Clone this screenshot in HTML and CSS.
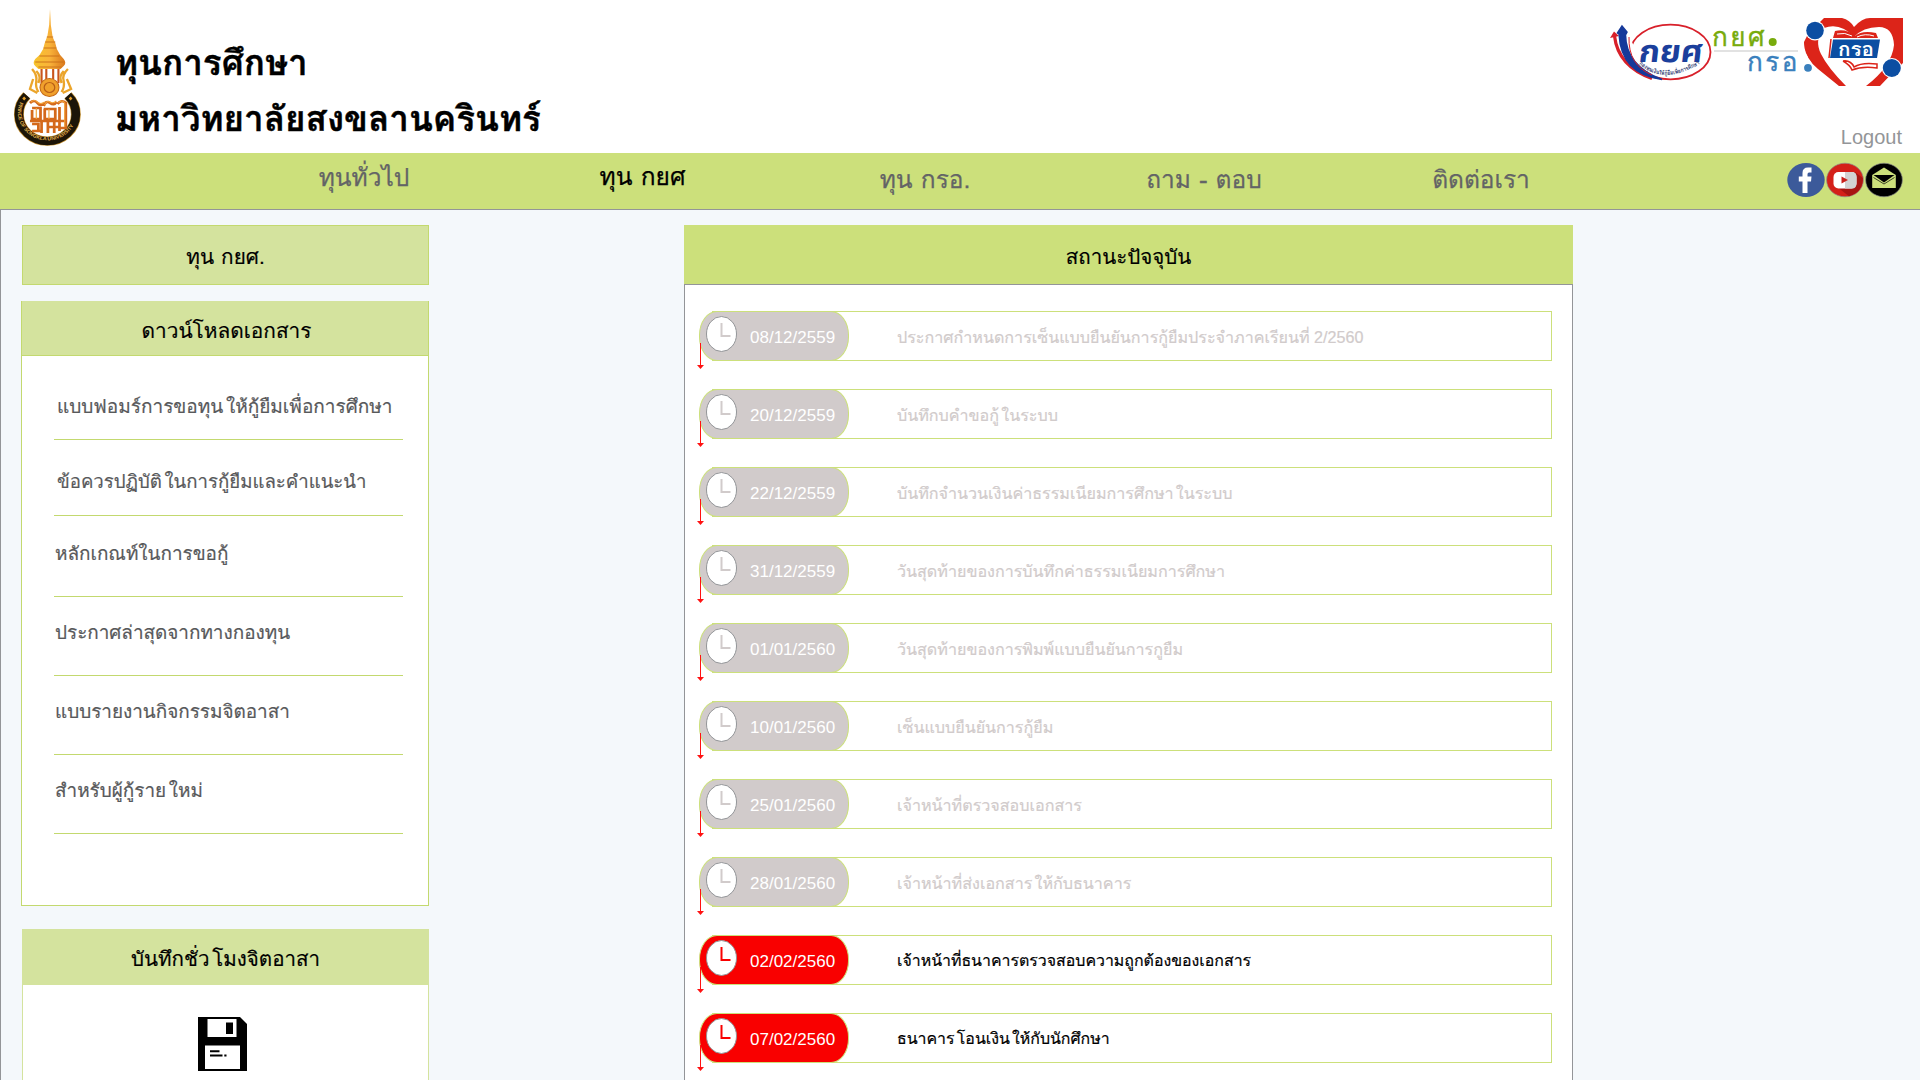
FILE: index.html
```html
<!DOCTYPE html>
<html lang="th">
<head>
<meta charset="utf-8">
<title>ทุนการศึกษา มหาวิทยาลัยสงขลานครินทร์</title>
<link rel="stylesheet" href="styles.css">
</head>
<body>
<header class="header">
  <svg class="emblem" viewBox="-2.400 -1 94.800 153" preserveAspectRatio="none" aria-hidden="true">
    <defs>
      <linearGradient id="gold" x1="0" x2="1"><stop offset="0" stop-color="#f7c52c"/><stop offset=".5" stop-color="#f9b33a"/><stop offset="1" stop-color="#d9771c"/></linearGradient>
      <path id="ringText" d="M19.500 101A28 28 0 1 0 71.500 101"/>
    </defs>
    <path d="M45 8L45.800 24L47.500 36L50 42L51.500 48Q54 54 58 58Q61 62 58 65L55 68H34L31 65Q28 62 31 58Q36 54 38.500 48L40 42L42.500 35L44.200 24Z" fill="url(#gold)"/>
    <path d="M42 36H48M40.500 41H50M39 47H51M35 55H54M31 61H58M34 66H56" stroke="#c96f18" stroke-width=".9" fill="none"/>
    <path d="M37 68V82M41.500 68V78M48 68V78M53 68V82" stroke="#c9541c" stroke-width="2" fill="none"/>
    <path d="M28 68Q33 74 32 80Q31 86 34 91M32 70Q37 75 34 82M29 78L26 88L33 92M62 68Q56 74 58 80Q59 86 56 91M58 70Q53 75 56 82M61 78L65 88L57 92" stroke="#eba52b" stroke-width="2.200" fill="none"/>
    <circle cx="44.500" cy="86.500" r="9" fill="#f0a02c" stroke="#c56a16"/>
    <circle cx="44.500" cy="86.500" r="5" fill="none" stroke="#b85f18" stroke-width="1.200"/>
    <path d="M23 94.500A27 27 0 1 0 62 94.500" fill="none" stroke="#c5902e" stroke-width="9.400"/>
    <path d="M23 94.500A27 27 0 1 0 62 94.500" fill="none" stroke="#1c1508" stroke-width="8.200"/>
    <path d="M20.500 95.500l1.800 2-1.800 2-1.800-2zM64.500 95.500l1.800 2-1.800 2-1.800-2z" fill="#e8a12c"/>
    <text class="ring-text" transform="translate(-3 0)"><textPath href="#ringText" startOffset="0">PRINCE OF SONGKLA UNIVERSITY</textPath></text>
    <g transform="translate(-3 -1)">
    <path d="M29 103Q33 99 36 103T43 103M42 106Q44 100 48 103T54 102M55 104Q59 99 63 103V128H58M57 107V131M31 108H39V119H31V110M42 109H53V119H43V109M31 124H37V131M40 121V133M46 121V133M52 120V133M29 121H62M31 131H40M46 127H57" fill="none" stroke="#d4691b" stroke-width="2.600"/>
    <path d="M30 102Q33 99 36 102T43 102M43 105Q45 100 48 102T54 101M56 103Q59 99 62 103V127M35 108V119M47 109V119" fill="none" stroke="#f3a33a" stroke-width="1.100"/>
    </g>
  </svg>
  <h1 class="title">ทุนการศึกษา<br>มหาวิทยาลัยสงขลานครินทร์</h1>
  <div class="header-side">
    <svg class="partners" viewBox="1608 14 296 76" aria-hidden="true">
      <defs>
        <path id="fundText" d="M1639 64Q1664 87 1703 62"/>
        <clipPath id="heartClip"><rect x="1804" y="18" width="99" height="68"/></clipPath>
      </defs>
      <ellipse cx="1670.500" cy="52" rx="40" ry="27.300" fill="#fff" stroke="#d8202a" stroke-width="1.800"/>
      <path d="M1630 38Q1612 18 1624 60L1650 79" fill="#fff"/>
      <path d="M1614.500 36Q1618 66 1652 78.500" fill="none" stroke="#d8202a" stroke-width="3.200"/>
      <path d="M1610 38L1614 31.500L1619 36Z" fill="#d8202a"/>
      <path d="M1617.500 33L1622 26L1627 32L1625.500 35Q1626 66 1662 79.500Q1621 74 1619 34Z" fill="#16399a" stroke="#16399a" stroke-width="1.500"/>
      <path d="M1629 37Q1628 65 1652 75" fill="none" stroke="#d8202a"/>
      <text class="fund-mark" transform="matrix(1 0 -.12 1 1638 61.500)" textLength="64" lengthAdjust="spacingAndGlyphs">กยศ</text>
      <text class="fund-name"><textPath href="#fundText" textLength="66" lengthAdjust="spacingAndGlyphs">กองทุนเงินให้กู้ยืมเพื่อการศึกษา</textPath></text>
      <text class="acronym green" x="1712" y="45.500">กยศ</text>
      <circle cx="1772.700" cy="42" r="4" fill="#78ab0c"/>
      <path d="M1714 51H1798" stroke="#e2e2e2" stroke-width="2"/>
      <text class="acronym blue" x="1747" y="71">กรอ</text>
      <g clip-path="url(#heartClip)">
        <path d="M1824 18H1842Q1850 20 1854 27Q1862 18 1870 18H1903V63Q1895 70 1880 86H1846Q1832 72 1812 62Q1804 54 1804 42L1808 34Z" fill="#dc2419"/>
        <path d="M1804 53Q1814 70 1846 89H1804Z" fill="#fff"/>
        <path d="M1804 42Q1806 60 1818 69L1839 86H1850L1820 50Z" fill="#dc2419"/>
        <path d="M1854 37Q1840 22 1824 28Q1814 40 1821 54Q1828 68 1846 86H1866Q1892 66 1894 45Q1893 27 1879 27Q1863 27 1854 37Z" fill="#fff"/>
      </g>
      <path d="M1835 31Q1846 28 1855 36Q1862 30 1876 33L1878 38H1833Z" fill="#dc2419"/>
      <path d="M1852 36Q1845 32 1837 34M1857 37Q1865 33 1874 36" stroke="#fff" fill="none"/>
      <path d="M1833 39.500H1880L1877 58H1830Z" fill="#0c4ea2"/>
      <path d="M1831 39L1829 58M1843 61Q1851 60 1854 67Q1862 62 1877 64V68Q1862 66 1852 70Q1850 65 1843 61" fill="none" stroke="#dc2419" stroke-width="1.500"/>
      <text class="heart-text" x="1838" y="55.500" textLength="36" lengthAdjust="spacingAndGlyphs">กรอ</text>
      <circle cx="1815" cy="30.500" r="10" fill="#fff"/><circle cx="1815" cy="30.500" r="8.800" fill="#0c4ea2"/>
      <circle cx="1891.800" cy="68" r="10" fill="#fff"/><circle cx="1891.800" cy="68" r="9" fill="#0c4ea2"/>
      <circle cx="1808" cy="67.800" r="4.800" fill="#fff"/><circle cx="1808" cy="67.800" r="3.900" fill="#3a80bd"/>
    </svg>
    <a class="logout">Logout</a>
  </div>
</header>

<nav class="nav">
  <ul class="menu">
    <li class="raised">ทุนทั่วไป</li>
    <li class="current">ทุน กยศ</li>
    <li class="loan">ทุน กรอ.</li>
    <li>ถาม - ตอบ</li>
    <li class="contact">ติดต่อเรา</li>
  </ul>
  <div class="social">
    <svg viewBox="0 0 38 36"><ellipse cx="19" cy="18" rx="18.700" ry="17" fill="#3c5a9a"/><path d="M15.500 31V19.500H11.800V14.500H15.500V11Q15.500 5.500 21 5.500H24.500V10.500H22Q20.500 10.500 20.500 12.200V14.500H24.500L24 19.500H20.500V31Z" fill="#fff"/></svg>
    <svg viewBox="0 0 38 36"><ellipse cx="19" cy="18" rx="18.400" ry="16.800" fill="#d42019" stroke="#8c8f8a" stroke-width=".7"/><path d="M29 10L36.800 16Q37 30 23 34.300L10 24Z" fill="#a81512"/><rect x="7.500" y="10" width="23" height="16.500" rx="5" fill="#fff"/><path d="M19 10H26Q30.500 10 30.500 15V21Q30.500 26.500 26 26.500H19Z" fill="#d2d2d2"/><path d="M15.500 14.500V21.500L22 18Z" fill="#c9201b"/></svg>
    <svg viewBox="0 0 38 36"><ellipse cx="19" cy="18" rx="18.400" ry="16.800" fill="#000" stroke="#8c8f8a" stroke-width=".7"/><path d="M7.200 13L19 5.500L30.800 13V26H7.200Z" fill="#cce07b"/><path d="M8.500 13H29.500L19 20.500Z" fill="#000"/><path d="M8.500 15.500L19 22L29.500 15.500" fill="none" stroke="#000" stroke-width=".7"/></svg>
  </div>
</nav>

<main class="page">
  <aside class="sidebar">
    <h2 class="topic">ทุน กยศ.</h2>
    <section class="downloads">
      <h2 class="panel-title">ดาวน์โหลดเอกสาร</h2>
      <ul class="links">
        <li class="indent">แบบฟอมร์การขอทุน<span class="lead">ใ</span>ห้กู้ยืมเพื่อการศึกษา</li>
        <li class="indent second">ข้อควรปฏิบัติ<span class="lead">ใ</span>นการกู้ยืมและคำแนะนำ</li>
        <li class="third">หลักเกณท์ในการขอกู้</li>
        <li>ประกาศล่าสุดจากทางกองทุน</li>
        <li>แบบรายงานกิจกรรมจิตอาสา</li>
        <li>สำหรับผู้กู้ราย<span class="lead">ใ</span>หม่</li>
      </ul>
    </section>
    <section class="hours">
      <h2 class="panel-title">บันทึกชั่ว<span class="lead">โ</span>มงจิตอาสา</h2>
      <svg class="floppy" viewBox="0 0 49 54"><path d="M0 0H42L49 7V54H0Z"/><path d="M9.500 2H38.500V20H9.500ZM7 28.500H42V52H7Z" fill="#fff"/><path d="M28 5.500H35V17H28Z"/><path d="M12 34.300H21.500M12 38.500H24.500M26.300 38.500H28.500" stroke="#000" stroke-width="2"/></svg>
    </section>
  </aside>

  <section class="status">
    <h2 class="status-title">สถานะปัจจุบัน</h2>
    <ol class="steps" id="steps"></ol>
  </section>
</main>
<script src="steps.js"></script>
</body>
</html>
```
FILE: styles.css
```css
* { box-sizing: border-box; }
body {
  margin: 0;
  height: 1080px;
  overflow: hidden;
  display: flex;
  flex-direction: column;
  background: #f4f8fb;
  color: #000;
  font-family: "Loma", "Liberation Sans", "Noto Sans", sans-serif;
}
h1, h2, ul, ol { margin: 0; padding: 0; font-weight: normal; }
ul, ol { list-style: none; }
svg { display: block; flex: none; }

.header { display: flex; height: 153px; flex: none; background: #fff; }
.emblem { width: 100px; height: 153px; }
.ring-text { font: bold 5px "Liberation Sans", sans-serif; fill: #e3b04a; }
.title { margin-left: 15px; padding-top: 35px; font-size: 35px; line-height: 56px; font-weight: bold; white-space: nowrap; -webkit-text-stroke: .4px currentColor; }
.header-side { margin-left: auto; display: flex; flex-direction: column; align-items: flex-end; padding: 14px 16px 0 0; }
.partners { width: 296px; height: 76px; }
.fund-mark { font: bold 31px "Noto Sans Thai", "Loma", sans-serif; fill: #1b3f9c; }
.fund-name { font: bold 6px "Loma", sans-serif; fill: #27336b; }
.acronym { font: 26px "Loma", sans-serif; letter-spacing: 2.5px; }
.green { fill: #78ab0c; stroke: #78ab0c; stroke-width: .4px; }
.blue { fill: #3a80bd; stroke: #3a80bd; stroke-width: .4px; }
.heart-text { font: bold 19px "Loma", sans-serif; fill: #fff; }
.logout { margin: 35px 2px 0 0; font: 20px/24px "Liberation Sans", sans-serif; color: #939598; }

.nav { display: flex; height: 57px; flex: none; background: #cce07b; border-bottom: 1px solid #939598; }
.menu { display: grid; grid-template-columns: repeat(5, 280px); margin-left: 224px; font-size: 24.5px; line-height: 32px; color: #636466; text-align: center; -webkit-text-stroke: .25px currentColor; }
.menu li { padding-top: 11px; }
.menu .raised { padding-top: 9px; }
.menu .current { padding: 8px 3px 0 0; color: #000; }
.menu .loan { padding-left: 2px; }
.menu .contact { padding-right: 6px; }
.social { display: flex; gap: 1px; margin-left: auto; padding: 9px 17px 0 0; }
.social svg { width: 38px; height: 36px; }

.page { display: flex; flex: 1; min-height: 0; overflow: hidden; border-left: 1px solid #939598; }
.sidebar { width: 429px; padding: 15px 0 0 20px; flex: none; display: flex; flex-direction: column; }
.topic { height: 60px; flex: none; margin-left: 1px; padding-top: 17px; border: 1px solid #c3d96f; background: #d4e39e; font-size: 20.7px; line-height: 28px; text-align: center; width: 407px; -webkit-text-stroke: .2px currentColor; }
.panel-title { background: #d4e39e; font-size: 20.8px; line-height: 28px; text-align: center; -webkit-text-stroke: .2px currentColor; }
.downloads { width: 408px; height: 605px; flex: none; margin-top: 16px; background: #fff; border: 1px solid #c3d96f; border-top: 0; }
.downloads .panel-title { height: 55px; padding: 16px 0 0 3px; border-bottom: 1px solid #c3d96f; }
.links { margin: 0 25px 0 32px; font-size: 18.9px; line-height: 26px; color: #58595b; white-space: nowrap; -webkit-text-stroke: .2px currentColor; }
.links li { height: 79px; padding: 22px 0 0 1px; border-bottom: 1px solid #c3d96f; }
.links .indent { height: 84px; padding: 37px 0 0 3px; font-size: 19px; }
.links .second { height: 76px; padding-top: 29px; font-size: 18.6px; }
.links .third { height: 81px; padding-top: 24px; }
.lead { padding-left: .14em; }
.hours { width: 407px; flex: 1; min-height: 0; margin: 23px 0 0 1px; background: #fff; border: 1px solid #d4e39e; border-bottom: 0; }
.hours .panel-title { height: 55px; padding-top: 15px; font-size: 20.5px; }
.floppy { width: 49px; height: 54px; margin: 32px 0 0 175px; }

.status { width: 889px; margin: 15px 0 0 254px; display: flex; flex-direction: column; }
.status-title { height: 59px; flex: none; padding-top: 18px; background: #cce07b; font-size: 20.5px; line-height: 28px; text-align: center; -webkit-text-stroke: .2px currentColor; }
.steps { flex: 1; min-height: 0; padding: 26px 20px 0 27px; display: grid; grid-auto-rows: 50px; align-content: start; gap: 28px; background: #fff; border: 1px solid #939598; border-bottom: 0; }
.step { display: flex; border: 1px solid #cce07b; white-space: nowrap; color: #d1cbcb; }
.pill { position: relative; display: flex; width: 150px; margin: -1px 0 -1px -14px; padding-left: 6px; border: 1px solid #cce07b; border-radius: 18px / 24px; background: #d1cbcb; color: #fff; }
.clock { width: 31px; height: 36px; margin-top: 4px; }
.face { fill: #fff; stroke: #939598; }
.hands { fill: none; stroke: #d1cbcb; stroke-width: 2; }
.date { margin-left: 13px; padding-top: 14px; font: 17px/24px "Liberation Sans", sans-serif; }
.arrow { position: absolute; left: -3px; top: 31px; width: 7px; height: 26px; }
.label { padding: 13px 0 0 48px; font-family: "Liberation Sans", "Loma", sans-serif; font-size: 16.1px; line-height: 24px; -webkit-text-stroke: .2px currentColor; }
.active { color: #000; }
.active .label { font-size: 15.9px; }
.active .pill { background: #f90000; }
.active .hands { stroke: #f90000; }
```
FILE: steps.js
```js
const steps = [
  ["08/12/2559", "ประกาศกำหนดการเซ็นแบบยืนยันการกู้ยืมประจำภาคเรียนที่ 2/2560"],
  ["20/12/2559", "บันทึกบคำขอกู้ในระบบ"],
  ["22/12/2559", "บันทึกจำนวนเงินค่าธรรมเนียมการศึกษาในระบบ"],
  ["31/12/2559", "วันสุดท้ายของการบันทึกค่าธรรมเนียมการศึกษา"],
  ["01/01/2560", "วันสุดท้ายของการพิมพ์แบบยืนยันการกูยืม"],
  ["10/01/2560", "เซ็นแบบยืนยันการกู้ยืม"],
  ["25/01/2560", "เจ้าหน้าที่ตรวจสอบเอกสาร"],
  ["28/01/2560", "เจ้าหน้าที่ส่งเอกสารให้กับธนาคาร"],
  ["02/02/2560", "เจ้าหน้าที่ธนาคารตรวจสอบความถูกต้องของเอกสาร", true],
  ["07/02/2560", "ธนาคารโอนเงินให้กับนักศึกษา", true]
];

document.getElementById("steps").innerHTML = steps.map(([date, label, active]) => `
  <li class="step${active ? " active" : ""}">
    <div class="pill">
      <svg class="clock" viewBox="0 0 31 36"><ellipse class="face" cx="15.500" cy="18" rx="15" ry="17.500"/><path class="hands" d="M15.500 7V20H24.500"/></svg>
      <span class="date">${date}</span>
      <svg class="arrow" viewBox="0 0 7 26"><path d="M3.500 0V22" stroke="#ff1212"/><path d="M0 22H7L3.500 26Z" fill="#ff1212"/></svg>
    </div>
    <span class="label">${label.replace(/[ใโ]/g, '<span class="lead">$&</span>')}</span>
  </li>`).join("");
```
